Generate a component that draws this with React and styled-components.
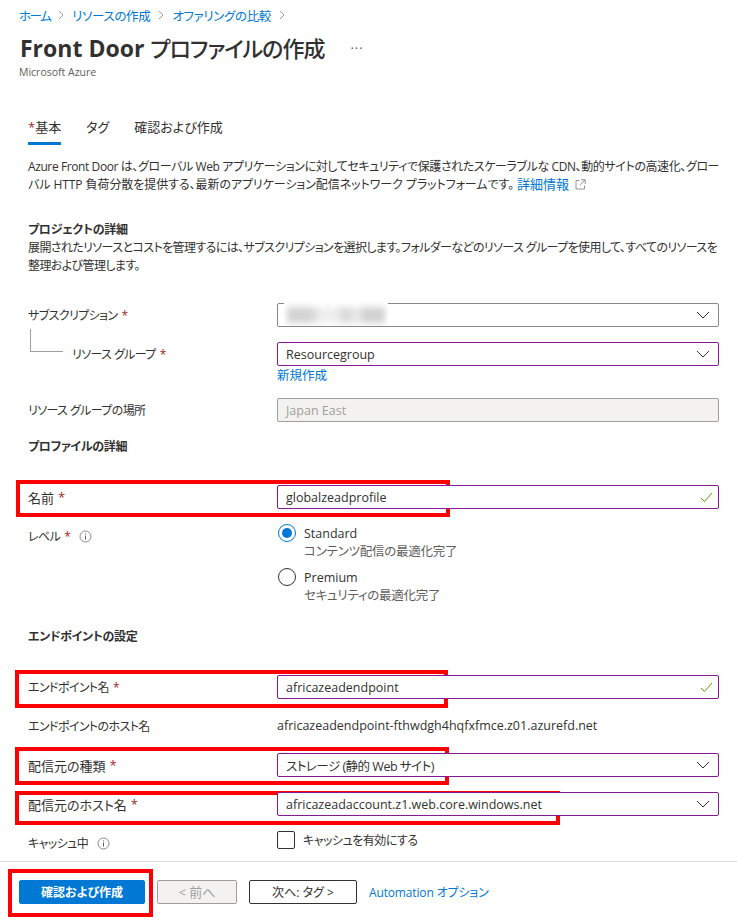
import React from "react";
import styled, { createGlobalStyle } from "styled-components";

const GlobalStyle = createGlobalStyle`
  html, body { margin: 0; padding: 0; background: #fff; }
  body {
    font-family: "Open Sans", "Noto Sans CJK JP", sans-serif;
    font-size: 12.5px;
    color: #323130;
    font-feature-settings: "palt";
  }
`;

const Page = styled.div`
  width: 737px;
  height: 921px;
  display: flex;
  flex-direction: column;
  overflow: hidden;
`;

const Content = styled.div`
  flex: 1;
  min-height: 0;
  padding: 6px 18px 0 28px;
`;

const Breadcrumb = styled.nav`
  display: flex;
  align-items: center;
  height: 18px;
  margin-left: -9px;
  gap: 8px;
`;

const Link = styled.a`
  color: #0078d4;
  text-decoration: none;
`;

const Crumb = styled(Link)`
  font-size: 12.5px;
  letter-spacing: ${(p) => p.$spacing || -0.35}px;
`;

const TitleRow = styled.div`
  display: flex;
  align-items: center;
  height: 32px;
  margin: 8px 0 0 -8px;
`;

const Title = styled.h1`
  margin: 0;
  font-size: 23px;
  font-weight: 700;
  line-height: 32px;
  color: #323130;
`;

const TitleKana = styled.span`
  font-weight: 500;
  font-size: 22px;
  letter-spacing: -1px;
`;

const More = styled.span`
  margin-left: 26px;
  font-size: 13px;
  line-height: 12px;
  letter-spacing: 1px;
  color: #605e5c;
`;

const Subtitle = styled.div`
  margin-left: -9px;
  height: 16px;
  font-size: 10.5px;
  line-height: 16px;
  color: #605e5c;
`;

const Tabs = styled.div`
  display: flex;
  gap: 25px;
  margin-top: 33px;
  height: 39px;
`;

const Tab = styled.div`
  padding-top: 4px;
  box-sizing: border-box;
  line-height: 20px;
  font-size: 13px;
  height: ${(p) => (p.$active ? "32px" : "28px")};
  border-bottom: ${(p) => (p.$active ? "3px solid #0078d4" : "none")};
`;

const TabStar = styled.span`
  color: #a4262c;
`;

const Paragraph = styled.p`
  margin: ${(p) => p.$top || 0}px 0 0;
  font-size: 12px;
  letter-spacing: ${(p) => p.$spacing ?? -0.4}px;
  line-height: 18px;
  height: 36px;
  white-space: nowrap;
`;

const LooseLine = styled.span`
  letter-spacing: -0.07px;
`;

const DetailLink = styled(Link)`
  font-size: 13px;
  line-height: 16px;
  letter-spacing: 0;
`;

const ExternalIcon = styled.svg`
  margin-left: 6px;
  vertical-align: -1px;
`;

const SectionTitle = styled.div`
  margin-top: ${(p) => p.$top}px;
  height: 18px;
  line-height: 18px;
  font-size: 12px;
  letter-spacing: -0.3px;
  font-weight: 700;
`;

const Row = styled.div`
  position: relative;
  display: grid;
  grid-template-columns: 249px 442px;
  margin-top: ${(p) => p.$top}px;
`;

const Label = styled.div`
  display: flex;
  align-items: center;
  gap: 4px;
  height: 24px;
  padding-left: ${(p) => p.$indent || 0}px;
  font-size: ${(p) => (p.$kanji ? 13 : 12)}px;
  letter-spacing: ${(p) => (p.$kanji ? 0 : -0.6)}px;
`;

const Star = styled.span`
  color: #a4262c;
`;

const InfoIcon = styled.svg`
  margin-left: 5px;
`;

const Connector = styled.span`
  position: absolute;
  left: 2px;
  top: -13px;
  width: 32px;
  height: 22px;
  border-left: 1px solid #a19f9d;
  border-bottom: 1px solid #a19f9d;
`;

const Field = styled.div`
  position: relative;
  display: flex;
  align-items: center;
  justify-content: space-between;
  box-sizing: border-box;
  height: 24px;
  padding: 0 8px;
  border: 1px solid ${(p) => p.$border || "#8a8886"};
  border-radius: 2px;
  background: ${(p) => p.$bg || "#fff"};
  color: ${(p) => p.$color || "#323130"};
  font-size: 12.5px;
  letter-spacing: ${(p) => p.$spacing || 0}px;
`;

const CheckIcon = styled.svg`
  margin-right: -3px;
`;

const Blurred = styled.div`
  position: absolute;
  left: 6px;
  top: -9px;
  width: 104px;
  height: 31px;
  background: #fff;
  overflow: hidden;
`;

const BlurBar = styled.div`
  width: 98px;
  height: 16px;
  margin: 12px 0 0 3px;
  background: linear-gradient(
    90deg,
    #d4d4d4 0 24%,
    #efefef 34% 50%,
    #dadada 58% 64%,
    #eeeeee 70%,
    #d2d2d2 80% 96%
  );
  filter: blur(3px);
`;

const LinkLine = styled(Link)`
  display: block;
  height: 18px;
  padding-top: 1px;
  box-sizing: border-box;
  font-size: 12.5px;
  line-height: 18px;
`;

const Plain = styled.div`
  height: 24px;
  line-height: 24px;
  font-size: 12.5px;
  white-space: nowrap;
`;

const RadioGroup = styled.div`
  display: flex;
  flex-direction: column;
  gap: 8px;
`;

const RadioItem = styled.div`
  display: grid;
  grid-template-columns: 27px auto;
  height: 36px;
`;

const RadioCircle = styled.span`
  position: relative;
  display: block;
  box-sizing: border-box;
  width: 18px;
  height: 18px;
  margin-left: 1px;
  border-radius: 50%;
  border: 1px solid ${(p) => (p.$on ? "#0078d4" : "#323130")};

  &::after {
    content: "";
    display: ${(p) => (p.$on ? "block" : "none")};
    position: absolute;
    left: 3px;
    top: 3px;
    width: 10px;
    height: 10px;
    border-radius: 50%;
    background: #0078d4;
  }
`;

const RadioBody = styled.div`
  padding-top: 1px;
`;

const RadioText = styled.div`
  line-height: 18px;
  font-size: 12.5px;
`;

const RadioDesc = styled.div`
  line-height: 18px;
  font-size: 12.5px;
  letter-spacing: -0.25px;
  color: #605e5c;
`;

const CheckRow = styled.div`
  display: flex;
  align-items: center;
  gap: 8px;
  height: 18px;
  font-size: 12px;
  letter-spacing: -0.5px;
`;

const CheckBox = styled.span`
  display: block;
  box-sizing: border-box;
  width: 18px;
  height: 18px;
  border: 1px solid #323130;
  border-radius: 2px;
`;

const Highlight = styled.div`
  position: absolute;
  box-sizing: border-box;
  left: ${(p) => p.$left}px;
  top: ${(p) => p.$top}px;
  width: ${(p) => p.$width}px;
  height: ${(p) => p.$height}px;
  border: 4px solid #ff0000;
  pointer-events: none;
`;

const Footer = styled.footer`
  position: relative;
  height: 60px;
  box-sizing: border-box;
  border-top: 1px solid #e1dfdd;
  display: flex;
  align-items: center;
  padding: 0 0 0 19px;
`;

const Button = styled.button`
  box-sizing: border-box;
  height: 24px;
  width: ${(p) => p.$width}px;
  margin-right: ${(p) => p.$gap}px;
  padding: 0;
  border-radius: 2px;
  font: inherit;
  font-size: 12px;
  font-feature-settings: "palt";
  border: 1px solid #323130;
  background: #fff;
  color: #323130;

  ${(p) => p.$primary && "background: #0078d4; border-color: #0078d4; color: #fff; font-weight: 600;"}
  ${(p) => p.$disabled && "background: #f3f2f1; border-color: #a19f9d; color: #a19f9d; font-size: 13px;"}
`;

const FooterLink = styled(Link)`
  font-size: 12px;
  letter-spacing: -0.15px;
  margin-top: 1px;
`;

const Chevron = () => (
  <svg width="14" height="8" viewBox="0 0 14 8" fill="none">
    <path d="M1 1l6 6 6-6" stroke="#323130" strokeWidth="1" />
  </svg>
);

const Check = () => (
  <CheckIcon width="13" height="11" viewBox="0 0 13 11" fill="none">
    <path d="M1 6l3.5 3.5L12 1" stroke="#57a300" strokeWidth="1" />
  </CheckIcon>
);

const CrumbArrow = () => (
  <svg width="6" height="10" viewBox="0 0 6 10" fill="none">
    <path d="M1 1l4 4-4 4" stroke="#a19f9d" strokeWidth="1" />
  </svg>
);

const Info = () => (
  <InfoIcon width="13" height="13" viewBox="0 0 13 13" fill="none">
    <circle cx="6.5" cy="6.5" r="5.5" stroke="#8a8886" />
    <path d="M6.5 5.5v4M6.5 3.4v1" stroke="#605e5c" />
  </InfoIcon>
);

const External = () => (
  <ExternalIcon width="11" height="11" viewBox="0 0 11 11" fill="none">
    <path d="M4.5 1.5H1v8.5h8.5V6.5M6 .8h4.2V5M10 1L4.8 6.2" stroke="#8a8886" strokeWidth="0.9" />
  </ExternalIcon>
);

const App = () => (
  <Page>
    <GlobalStyle />
    <Content>
      <Breadcrumb>
        <Crumb $spacing={-1.5}>ホーム</Crumb>
        <CrumbArrow />
        <Crumb>リソースの作成</Crumb>
        <CrumbArrow />
        <Crumb>オファリングの比較</Crumb>
        <CrumbArrow />
      </Breadcrumb>
      <TitleRow>
        <Title>
          Front Door <TitleKana>プロファイルの作成</TitleKana>
        </Title>
        <More>···</More>
      </TitleRow>
      <Subtitle>Microsoft Azure</Subtitle>

      <Tabs>
        <Tab $active>
          <TabStar>*</TabStar>基本
        </Tab>
        <Tab>タグ</Tab>
        <Tab>確認および作成</Tab>
      </Tabs>

      <Paragraph $top={6}>
        Azure Front Door は、グローバル Web アプリケーションに対してセキュリティで保護されたスケーラブルな CDN、動的サイトの高速化、グロー
        <br />
        <LooseLine>バル HTTP 負荷分散を提供する、最新のアプリケーション配信ネットワーク プラットフォームです。 </LooseLine>
        <DetailLink>詳細情報</DetailLink>
        <External />
      </Paragraph>

      <SectionTitle $top={27}>プロジェクトの詳細</SectionTitle>
      <Paragraph $spacing={-0.6}>
        展開されたリソースとコストを管理するには、サブスクリプションを選択します。フォルダーなどのリソース グループを使用して、すべてのリソースを
        <br />
        整理および管理します。
      </Paragraph>

      <Row $top={28}>
        <Label>
          サブスクリプション <Star>*</Star>
        </Label>
        <Field>
          <Blurred>
            <BlurBar />
          </Blurred>
          <span />
          <Chevron />
        </Field>
      </Row>
      <Row $top={15}>
        <Connector />
        <Label $indent={44}>
          リソース グループ <Star>*</Star>
        </Label>
        <div>
          <Field $border="#881798">
            Resourcegroup
            <Chevron />
          </Field>
          <LinkLine>新規作成</LinkLine>
        </div>
      </Row>
      <Row $top={14}>
        <Label>リソース グループの場所</Label>
        <Field $bg="#f3f2f1" $border="#a19f9d" $color="#a19f9d">
          Japan East
        </Field>
      </Row>

      <SectionTitle $top={16}>プロファイルの詳細</SectionTitle>

      <Row $top={29}>
        <Highlight $left={-12} $top={-5} $width={434} $height={37} />
        <Label $kanji>
          名前 <Star>*</Star>
        </Label>
        <Field $border="#881798">
          globalzeadprofile
          <Check />
        </Field>
      </Row>
      <Row $top={15}>
        <Label>
          レベル <Star>*</Star>
          <Info />
        </Label>
        <RadioGroup>
          <RadioItem>
            <RadioCircle $on />
            <RadioBody>
              <RadioText>Standard</RadioText>
              <RadioDesc>コンテンツ配信の最適化完了</RadioDesc>
            </RadioBody>
          </RadioItem>
          <RadioItem>
            <RadioCircle />
            <RadioBody>
              <RadioText>Premium</RadioText>
              <RadioDesc>セキュリティの最適化完了</RadioDesc>
            </RadioBody>
          </RadioItem>
        </RadioGroup>
      </Row>

      <SectionTitle $top={24}>エンドポイントの設定</SectionTitle>

      <Row $top={29}>
        <Highlight $left={-13} $top={-5} $width={433} $height={38} />
        <Label>
          エンドポイント名 <Star>*</Star>
        </Label>
        <Field $border="#881798">
          africazeadendpoint
          <Check />
        </Field>
      </Row>
      <Row $top={15}>
        <Label>エンドポイントのホスト名</Label>
        <Plain>africazeadendpoint-fthwdgh4hqfxfmce.z01.azurefd.net</Plain>
      </Row>
      <Row $top={15}>
        <Highlight $left={-13} $top={-6} $width={434} $height={38} />
        <Label $kanji>
          配信元の種類 <Star>*</Star>
        </Label>
        <Field $border="#881798" $spacing={-0.5}>
          ストレージ (静的 Web サイト)
          <Chevron />
        </Field>
      </Row>
      <Row $top={15}>
        <Highlight $left={-13} $top={-1} $width={545} $height={34} />
        <Label $kanji>
          配信元のホスト名 <Star>*</Star>
        </Label>
        <Field $border="#881798">
          africazeadaccount.z1.web.core.windows.net
          <Chevron />
        </Field>
      </Row>
      <Row $top={15}>
        <Label>
          キャッシュ中
          <Info />
        </Label>
        <CheckRow>
          <CheckBox />
          キャッシュを有効にする
        </CheckRow>
      </Row>
    </Content>
    <Footer>
      <Highlight $left={8} $top={7} $width={145} $height={48} />
      <Button $primary $width={126} $gap={12}>確認および作成</Button>
      <Button $disabled $width={80} $gap={12}>&lt; 前へ</Button>
      <Button $width={108} $gap={12}>次へ: タグ &gt;</Button>
      <FooterLink>Automation オプション</FooterLink>
    </Footer>
  </Page>
);

export default App;
